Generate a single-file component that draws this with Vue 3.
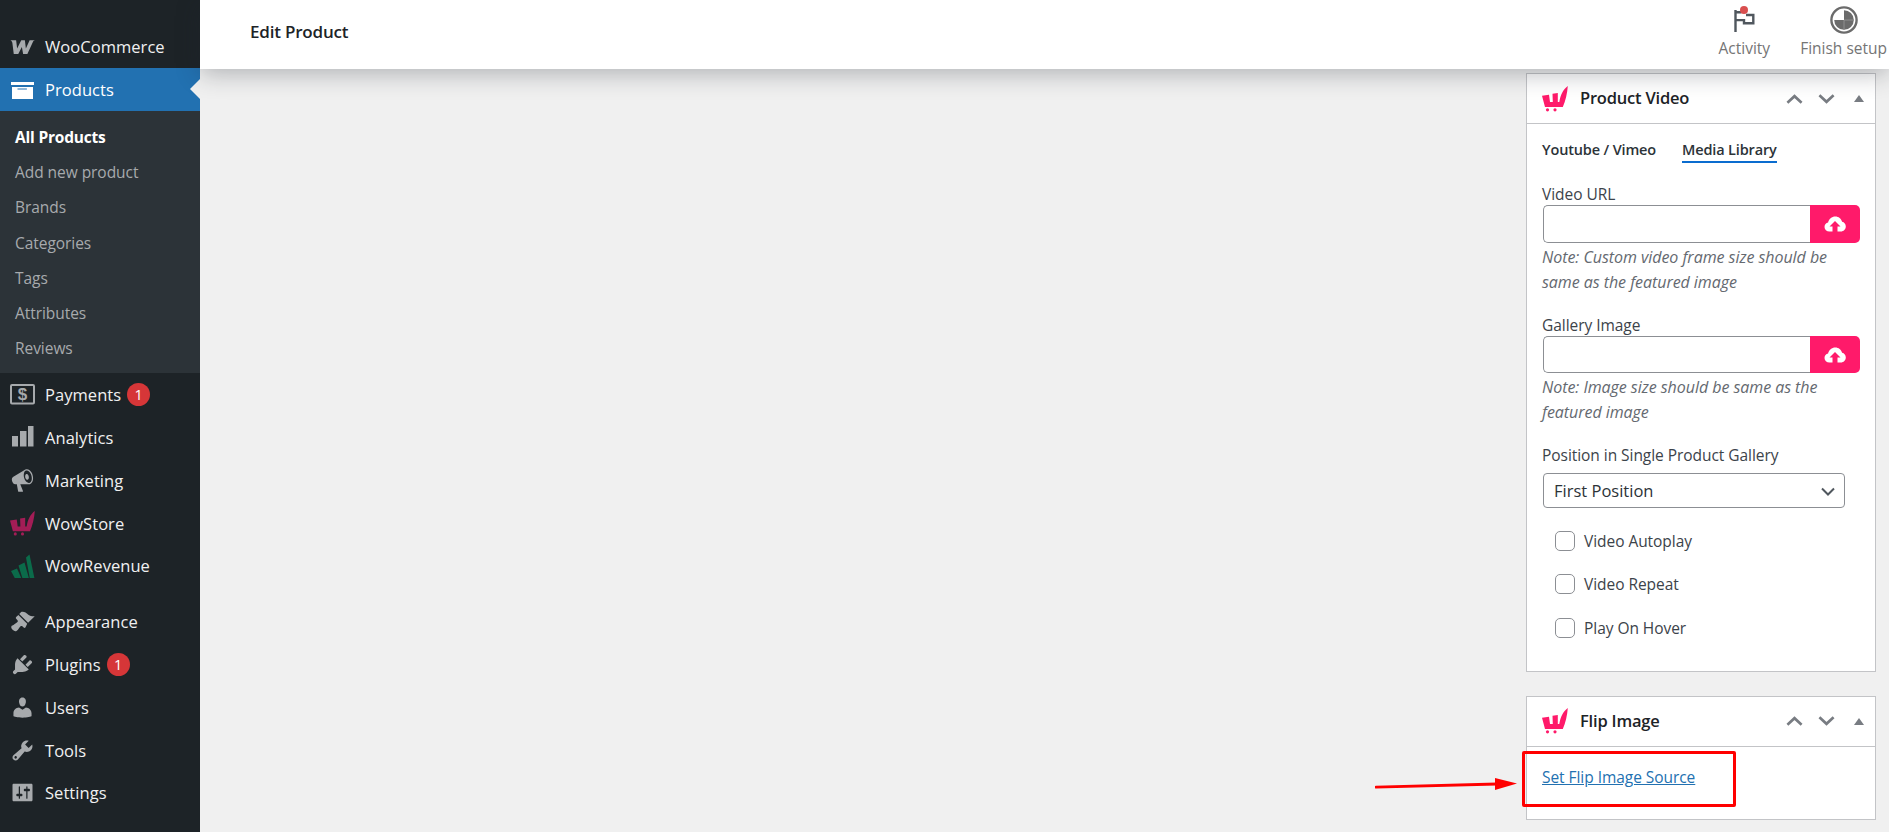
<template>
  <div class="page">
    <aside class="sidebar">
      <div class="menu-item" v-for="item in topMenu" :key="item.label" :class="{ active: item.active }">
        <svg class="menu-icon" viewBox="0 0 20 20">
          <path :d="icons[item.icon]" fill-rule="evenodd" />
        </svg>
        <span>{{ item.label }}</span>
      </div>
      <ul class="submenu">
        <li v-for="(sub, i) in submenu" :key="sub" :class="{ current: i === 0 }">{{ sub }}</li>
      </ul>
      <div class="menu-item main-item" v-for="item in mainMenu" :key="item.label" :class="{ spaced: item.spaced }">
        <svg v-if="item.icon === 'wow'" class="menu-icon store" viewBox="0 0 26 26">
          <path :d="wowLogo" /><circle cx="5.500" cy="23.800" r="1.600" /><circle cx="13" cy="23.800" r="1.600" />
        </svg>
        <svg v-else-if="item.icon === 'revenue'" class="menu-icon revenue" viewBox="-1 -1.500 25 25">
          <path d="M0 16.500L6 14l4.500 10H4zM7.500 11l6-3L18 24h-6.500zM15 3l3.500-3 5 24h-4.700z" />
        </svg>
        <svg v-else-if="item.icon === 'payments'" class="menu-icon" viewBox="0 0 25 25">
          <rect x="1" y="3" width="23" height="18.500" rx="1" fill="none" stroke="#a7aaad" stroke-width="2" />
          <text x="12.500" y="18" text-anchor="middle" class="dollar">$</text>
        </svg>
        <svg v-else-if="item.icon === 'analytics'" class="menu-icon" viewBox="0 0 25 25">
          <path d="M2 11h6v10.500H2zM10 6h6.500v15.500H10zM18 1h5.500v20.500H18z" />
        </svg>
        <svg v-else class="menu-icon" viewBox="0 0 20 20">
          <path :d="icons[item.icon]" fill-rule="evenodd" />
        </svg>
        <span>{{ item.label }}</span>
        <em v-if="item.badge" class="badge">{{ item.badge }}</em>
      </div>
    </aside>

    <div class="main">
      <header class="topbar">
        <h1>Edit Product</h1>
        <div class="top-actions">
          <div class="top-action">
            <svg class="top-icon" viewBox="0 0 28 28">
              <path d="M5.500 4v22M5.500 6.300h6M16 9h7.300v8.300H14v-3.200H5.500" fill="none" stroke="#50575e" stroke-width="2.400" />
              <circle cx="14" cy="4" r="4" fill="#d94f4f" />
            </svg>
            <span>Activity</span>
          </div>
          <div class="top-action setup">
            <svg class="top-icon" viewBox="0 0 28 28">
              <circle cx="14" cy="14" r="12.600" fill="none" stroke="#6b6b6b" stroke-width="2.400" />
              <path d="M14 4.200a9.800 9.800 0 1 1-9.800 9.800H14z" fill="#6b6b6b" />
              <path d="M14 14v9.800M14 14h9.800" stroke="#8f8f8f" stroke-width="1" />
            </svg>
            <span>Finish setup</span>
          </div>
        </div>
      </header>

      <div class="content">
        <div class="side-column">
          <section class="panel">
            <div class="panel-head">
              <svg class="logo" viewBox="0 0 26 26">
                <path :d="wowLogo" /><circle cx="5.500" cy="23.800" r="1.600" /><circle cx="13" cy="23.800" r="1.600" />
              </svg>
              <h2>Product Video</h2>
              <div class="head-controls">
                <svg viewBox="0 0 18 10"><path d="M1.500 9L9 2l7.500 7" /></svg>
                <svg viewBox="0 0 18 10"><path d="M1.500 1L9 8l7.500-7" /></svg>
                <i class="tri"></i>
              </div>
            </div>
            <div class="panel-body">
              <div class="tabs">
                <span>Youtube / Vimeo</span>
                <span class="on">Media Library</span>
              </div>
              <label class="first">Video URL</label>
              <div class="upload">
                <input type="text" />
                <button>
                  <svg viewBox="0 0 22 16"><path :d="cloud" fill-rule="evenodd" /></svg>
                </button>
              </div>
              <p class="note">Note: Custom video frame size should be same as the featured image</p>
              <label>Gallery Image</label>
              <div class="upload short">
                <input type="text" />
                <button>
                  <svg viewBox="0 0 22 16"><path :d="cloud" fill-rule="evenodd" /></svg>
                </button>
              </div>
              <p class="note">Note: Image size should be same as the featured image</p>
              <label class="pos-label">Position in Single Product Gallery</label>
              <div class="select-wrap">
                <select>
                  <option>First Position</option>
                </select>
                <svg viewBox="0 0 14 9"><path d="M1 1.500l6 6 6-6" /></svg>
              </div>
              <div class="check-row" v-for="c in checks" :key="c">
                <input type="checkbox" />
                <span>{{ c }}</span>
              </div>
            </div>
          </section>

          <section class="panel flip">
            <div class="panel-head">
              <svg class="logo" viewBox="0 0 26 26">
                <path :d="wowLogo" /><circle cx="5.500" cy="23.800" r="1.600" /><circle cx="13" cy="23.800" r="1.600" />
              </svg>
              <h2>Flip Image</h2>
              <div class="head-controls">
                <svg viewBox="0 0 18 10"><path d="M1.500 9L9 2l7.500 7" /></svg>
                <svg viewBox="0 0 18 10"><path d="M1.500 1L9 8l7.500-7" /></svg>
                <i class="tri"></i>
              </div>
            </div>
            <div class="flip-body">
              <a href="#">Set Flip Image Source</a>
              <div class="highlight"></div>
              <svg class="arrow" viewBox="0 0 144 16">
                <path d="M1 11.200L122 8" stroke="#f00" stroke-width="2.800" stroke-linecap="round" />
                <path d="M120 2L142 7.500 120 14z" fill="#f00" />
              </svg>
            </div>
          </section>
        </div>
      </div>
    </div>
  </div>
</template>

<script setup>
const wowLogo = 'M0 9.800L7 8.800 8 16h2.800L10.500 7.800 15.800 7v9h1.500C18.500 9 21 3.500 25.800 0 25.300 7 23.500 15 20.800 21H3z'
const cloud = 'M5.500 15.500C2.500 15.500.5 13.500.5 11c0-2.200 1.500-4 3.600-4.400C4.800 3 7.800.5 11.300.5c3.300 0 6 2.200 6.800 5.300 2.200.5 3.700 2.400 3.700 4.700 0 2.800-2.200 5-5 5H13.500V10.500h3L11 5 5.500 10.500h3v5z'

const icons = {
  woo: 'M.2 5h4.700l.8 6.600L9 5h2.900l.8 6.600L15.700 5H20c-.8.1-1.300.5-1.700 1.300L13.900 16h-3.400l-1-5.700L6.600 16H3L1.900 7.100C1.700 5.900 1 5.300.2 5z',
  box: 'M.8 4h18.400v2.400H.8zM1.600 8h16.800v9.600H1.600zM6 9.200V10h7.500v-.8z',
  megaphone: 'M18.150 5.940c.46 1.620.38 3.220-.02 4.480-.42 1.280-1.260 2.180-2.300 2.480-.16.060-.26.060-.40.060-.06.020-.12.020-.18.020-.06.020-.14.020-.22.020h-6.800l2.220 5.500c.02.140-.06.260-.14.340-.08.100-.24.160-.34.160H6.950c-.10 0-.26-.06-.34-.16-.08-.08-.16-.20-.14-.34l-1-5.500H4.250l-.02-.02c-.50.060-1.080-.18-1.540-.62s-.88-1.080-1.060-1.880c-.24-.80-.20-1.560-.02-2.200.18-.62.58-1.080 1.060-1.300l.02-.02 9-5.400c.10-.06.18-.10.24-.16.060-.04.14-.08.24-.12.160-.08.280-.12.500-.18 1.040-.30 2.240.10 3.240.98s1.840 2.240 2.260 3.860zm-2.580 5.980h-.02c.40-.10.740-.34 1.040-.70.58-.70.860-1.760.860-3.040-.02-.64-.10-1.300-.28-1.980-.34-1.360-1.020-2.500-1.780-3.240s-1.680-1.100-2.460-.88c-.82.220-1.400.96-1.700 2-.32 1.040-.28 2.360.06 3.720.38 1.360 1 2.500 1.800 3.240.78.740 1.620 1.100 2.480.88zm-2.540-7.080c.22-.04.42-.02.62.04.38.16.76.48 1.020 1s.42 1.200.42 1.780c0 .30-.04.56-.12.80-.18.48-.44.84-.86.94-.34.100-.80-.06-1.140-.40-.36-.36-.62-.90-.76-1.500-.12-.60-.12-1.180.02-1.660.14-.48.44-.88.80-1z',
  brush: 'M14.480 11.060L7.410 3.990l1.500-1.500c.50-.56 2.300-.47 3.510.32 1.210.80 1.430 1.280 2.910 2.100 1.180.64 2.450 1.260 4.450.85zm-.71.71L6.700 4.700 4.930 6.470c-.39.39-.39 1.020 0 1.410l1.060 1.060c.39.39.39 1.030 0 1.420-.60.60-1.430 1.110-2.210 1.690-.35.26-.70.53-1.010.84C1.430 13.230 1 13.840 1 14.500c0 .65.50 1.500 1.150 2.150.66.66 1.500 1.150 2.150 1.150.66 0 1.270-.43 1.620-.78.31-.31.58-.66.84-1.010.58-.78 1.090-1.610 1.690-2.210.39-.39 1.030-.39 1.420 0l1.060 1.060c.39.39 1.020.39 1.410 0z',
  plugin: 'M13.110 4.360L9.870 7.600 8 5.730l3.240-3.240c.35-.34 1.050-.20 1.560.32.52.51.66 1.210.31 1.550zm-8 1.770l.91-1.120 9.010 9.010-1.190.84c-.71.71-2.630 1.160-3.820 1.160H6.140L4.900 17.260c-.59.59-1.540.59-2.120 0-.59-.58-.59-1.530 0-2.120l1.240-1.240v-3.880c0-1.130.40-3.190 1.090-3.890zm7.260 3.970l3.240-3.240c.34-.35 1.040-.21 1.550.31.52.51.66 1.210.31 1.550l-3.240 3.250z',
  users: 'M10 9.250c-2.270 0-2.730-3.440-2.730-3.440C7 4.020 7.820 2 9.970 2c2.160 0 2.980 2.020 2.710 3.810 0 0-.41 3.440-2.680 3.440zm0 2.570L12.720 10c2.390 0 4.520 2.330 4.520 4.530v2.490s-3.650 1.130-7.240 1.130c-3.650 0-7.240-1.130-7.240-1.130v-2.490c0-2.250 1.940-4.480 4.470-4.480z',
  tools: 'M16.680 9.770c-1.340 1.340-3.300 1.670-4.950.99l-5.410 6.520c-.99.99-2.590.99-3.580 0s-.99-2.590 0-3.570l6.520-5.420c-.68-1.650-.35-3.610.99-4.950 1.280-1.280 3.120-1.620 4.720-1.060l-2.890 2.890 2.820 2.820 2.860-2.870c.53 1.580.18 3.390-1.080 4.650zM3.810 16.210c.40.39 1.040.39 1.430 0 .40-.40.40-1.040 0-1.430-.39-.40-1.030-.40-1.430 0-.39.39-.39 1.030 0 1.430z',
  settings: 'M18 16V4c0-.55-.45-1-1-1H3c-.55 0-1 .45-1 1v12c0 .55.45 1 1 1h14c.55 0 1-.45 1-1zM8 11h1c.55 0 1 .45 1 1s-.45 1-1 1H8v1.500c0 .28-.22.50-.50.50s-.50-.22-.50-.50V13H6c-.55 0-1-.45-1-1s.45-1 1-1h1V5.500c0-.28.22-.50.50-.50s.50.22.50.50V11zm5-2h-1c-.55 0-1-.45-1-1s.45-1 1-1h1V5.500c0-.28.22-.50.50-.50s.50.22.50.50V7h1c.55 0 1 .45 1 1s-.45 1-1 1h-1v5.500c0 .28-.22.50-.50.50s-.50-.22-.50-.50V9z'
}

const topMenu = [
  { label: 'WooCommerce', icon: 'woo' },
  { label: 'Products', icon: 'box', active: true }
]
const submenu = ['All Products', 'Add new product', 'Brands', 'Categories', 'Tags', 'Attributes', 'Reviews']
const mainMenu = [
  { label: 'Payments', icon: 'payments', badge: 1 },
  { label: 'Analytics', icon: 'analytics' },
  { label: 'Marketing', icon: 'megaphone' },
  { label: 'WowStore', icon: 'wow' },
  { label: 'WowRevenue', icon: 'revenue' },
  { label: 'Appearance', icon: 'brush', spaced: true },
  { label: 'Plugins', icon: 'plugin', badge: 1 },
  { label: 'Users', icon: 'users' },
  { label: 'Tools', icon: 'tools' },
  { label: 'Settings', icon: 'settings' }
]
const checks = ['Video Autoplay', 'Video Repeat', 'Play On Hover']
</script>

<style>
html, body {
  margin: 0;
  background: #f0f0f0;
  overflow: hidden;
}
</style>

<style scoped>
.page {
  display: flex;
  height: 832px;
  overflow: hidden;
  font-family: "Open Sans", "Noto Sans", sans-serif;
  font-size: 15px;
  color: #3c434a;
  background: #f0f0f0;
}

.sidebar {
  width: 200px;
  flex-shrink: 0;
  padding-top: 25px;
  box-sizing: border-box;
  background: #1d2327;
  color: #f0f0f1;
}

.menu-item {
  position: relative;
  display: flex;
  align-items: center;
  height: 43px;
  padding-left: 10px;
  font-size: 16.500px;
  letter-spacing: 0.050px;
}
.main-item {
  height: 42.800px;
}
.menu-item.spaced {
  margin-top: 13px;
}
.menu-item.active {
  background: #2271b1;
  color: #fff;
}
.menu-item.active::after {
  content: "";
  position: absolute;
  right: 0;
  top: 11px;
  border: 10px solid transparent;
  border-right-color: #f0f0f0;
  border-left-width: 0;
}

.menu-icon {
  width: 25px;
  height: 25px;
  margin-right: 10px;
  flex-shrink: 0;
  fill: #a7aaad;
}
.menu-item.active .menu-icon {
  fill: #fff;
}
.menu-icon.store {
  fill: #a31d56;
}
.menu-icon.revenue {
  fill: #0b6b4a;
}
.dollar {
  font-size: 17px;
  font-weight: 700;
  fill: #a7aaad;
  font-family: "Liberation Sans", sans-serif;
}

.badge {
  display: flex;
  align-items: center;
  justify-content: center;
  width: 23px;
  height: 23px;
  margin-left: 6px;
  border-radius: 50%;
  background: #d63638;
  color: #fff;
  font-style: normal;
  font-size: 14.500px;
  letter-spacing: 0;
}

.submenu {
  margin: 0;
  padding: 9px 0 7px;
  list-style: none;
  background: #2c3338;
  color: #a7aaad;
  font-size: 15.500px;
  letter-spacing: -0.050px;
}
.submenu li {
  height: 35.200px;
  line-height: 35.200px;
  padding-left: 15px;
}
.submenu li.current {
  color: #fff;
  font-weight: 700;
  letter-spacing: -0.200px;
}

.main {
  flex: 1;
  min-width: 0;
  display: flex;
  flex-direction: column;
}

.topbar {
  position: relative;
  z-index: 2;
  display: flex;
  align-items: flex-start;
  justify-content: space-between;
  height: 69px;
  flex-shrink: 0;
  background: #fff;
  box-shadow: 0 5px 24px rgba(30, 35, 45, 0.3);
}
.topbar h1 {
  margin: 20px 0 0 50px;
  font-size: 17px;
  line-height: 24px;
  font-weight: 600;
  letter-spacing: -0.200px;
  color: #1d2327;
}
.top-actions {
  display: flex;
  gap: 30px;
  padding-right: 2px;
}
.top-action {
  display: flex;
  flex-direction: column;
  align-items: center;
  color: #757575;
  font-size: 15.500px;
}
.top-icon {
  width: 28px;
  height: 28px;
  margin: 6px 0 3px;
}

.content {
  flex: 1;
  display: flex;
  justify-content: flex-end;
  padding: 4px 13px 0 0;
}
.side-column {
  width: 350px;
}

.panel {
  box-sizing: border-box;
  border: 1px solid #c3c4c7;
  background: #fff;
}
.panel.flip {
  margin-top: 24px;
}
.panel-head {
  display: flex;
  align-items: center;
  height: 49px;
  padding-left: 15px;
  border-bottom: 1px solid #c3c4c7;
}
.logo {
  width: 26px;
  height: 26px;
  margin-right: 12px;
  fill: #ff1a6a;
}
.panel-head h2 {
  margin: 0 0 2px;
  font-size: 16.500px;
  font-weight: 600;
  letter-spacing: -0.200px;
  color: #1d2327;
}
.head-controls {
  margin-left: auto;
  padding-right: 11px;
  display: flex;
  align-items: center;
  gap: 15px;
}
.head-controls svg {
  width: 17px;
  height: 10px;
  fill: none;
  stroke: #787c82;
  stroke-width: 2.800;
}
.tri {
  margin-left: 4px;
  border: 5px solid transparent;
  border-bottom: 7px solid #787c82;
  border-top: 0;
}

.panel-body {
  padding: 14px 15px 21px;
}
.tabs {
  display: flex;
  gap: 26px;
  font-size: 14.500px;
  font-weight: 600;
  letter-spacing: -0.150px;
  color: #2c3338;
}
.tabs span {
  height: 23px;
  line-height: 23px;
  border-bottom: 2px solid transparent;
}
.tabs .on {
  border-bottom-color: #0a6ccf;
}

label {
  display: block;
  margin-top: 21px;
  line-height: 21px;
  font-size: 15.500px;
  letter-spacing: -0.050px;
}
label.pos-label {
  margin-bottom: 7px;
}

.upload {
  display: flex;
  width: 317px;
  height: 38px;
  margin-left: 1px;
}
.upload.short {
  height: 37px;
}
.upload input {
  flex: 1;
  min-width: 0;
  box-sizing: border-box;
  border: 1px solid #8c8f94;
  border-right: 0;
  border-radius: 5px 0 0 5px;
  background: #fff;
  outline: none;
}
.upload button {
  width: 50px;
  border: 0;
  padding: 0;
  border-radius: 0 5px 5px 0;
  background: #ff1a6a;
  display: flex;
  align-items: center;
  justify-content: center;
}
.upload svg {
  width: 22px;
  height: 16px;
  fill: #fff;
}

.note {
  margin: 2px 0 0;
  width: 316px;
  font-size: 16px;
  line-height: 24.500px;
  font-style: italic;
  letter-spacing: -0.050px;
  color: #646970;
}

.select-wrap {
  position: relative;
  width: 302px;
  height: 35px;
  margin-left: 1px;
  margin-bottom: 11px;
}
.select-wrap select {
  width: 100%;
  height: 100%;
  box-sizing: border-box;
  appearance: none;
  border: 1px solid #8c8f94;
  border-radius: 4px;
  background: #fff;
  padding-left: 10px;
  font: inherit;
  font-size: 16.500px;
  color: #2c3338;
}
.select-wrap svg {
  position: absolute;
  right: 10px;
  top: 14px;
  width: 14px;
  height: 9px;
  fill: none;
  stroke: #50575e;
  stroke-width: 2;
}

.check-row {
  display: flex;
  align-items: center;
  height: 43.500px;
  padding-left: 13px;
  gap: 9px;
  font-size: 15.500px;
  letter-spacing: -0.050px;
}
.check-row input {
  appearance: none;
  margin: 0;
  width: 20px;
  height: 20px;
  box-sizing: border-box;
  border: 1px solid #8c8f94;
  border-radius: 5px;
  background: #fff;
}

.flip-body {
  position: relative;
  height: 72px;
  padding: 19px 15px 0;
  box-sizing: border-box;
}
.flip-body a {
  color: #2271b1;
  font-size: 15.500px;
  line-height: 22px;
  letter-spacing: -0.050px;
}
.highlight {
  position: absolute;
  left: -5px;
  top: 4px;
  width: 214px;
  height: 56px;
  box-sizing: border-box;
  border: 3.500px solid #f00;
  border-radius: 2px;
}
.arrow {
  position: absolute;
  left: -152px;
  top: 29px;
  width: 144px;
  height: 16px;
}
</style>
